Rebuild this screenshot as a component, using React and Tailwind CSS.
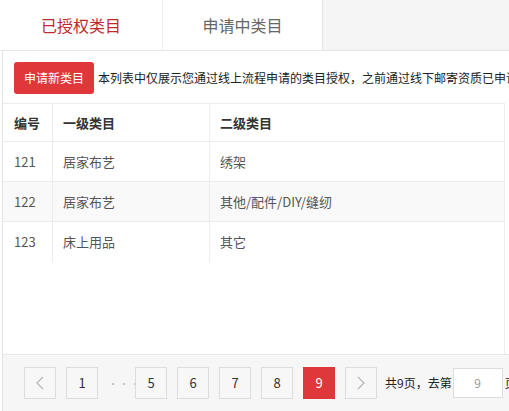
import React from "react";

const rows = [
  { id: "121", first: "居家布艺", second: "绣架" },
  { id: "122", first: "居家布艺", second: "其他/配件/DIY/缝纫" },
  { id: "123", first: "床上用品", second: "其它" },
];

function PageBtn({ children, active }) {
  return (
    <div
      className={
        active
          ? "w-8 h-8 shrink-0 flex items-center justify-center bg-[#e0383a] border border-[#e0383a] text-white text-[13px]"
          : "w-8 h-8 shrink-0 flex items-center justify-center bg-[#f7f7f7] border border-[#dcdcdc] text-[#333] text-[13px]"
      }
    >
      {children}
    </div>
  );
}

function Chevron({ dir }) {
  return (
    <svg width="10" height="16" viewBox="0 0 10 16" fill="none" stroke="#b5b5b5" strokeWidth="1.2">
      {dir === "left" ? <polyline points="8,2 2,8 8,14" /> : <polyline points="2,2 8,8 2,14" />}
    </svg>
  );
}

export default function App() {
  return (
    <div
      className="w-[509px] h-[411px] overflow-hidden bg-white flex flex-col"
      style={{ fontFamily: '"Microsoft YaHei", "Noto Sans CJK SC", "Noto Sans", sans-serif' }}
    >
      {/* tabs */}
      <div className="flex h-[51px] shrink-0 bg-[#f5f5f5] border-b border-[#e5e5e5]">
        <div className="w-[163px] bg-white border-r border-[#eeeeee] flex items-center justify-center text-[16px] text-[#c0282d]">
          已授权类目
        </div>
        <div className="w-[160px] bg-white border-r border-[#e5e5e5] flex items-center justify-center text-[16px] text-[#666]">
          申请中类目
        </div>
      </div>

      {/* content */}
      <div className="flex-1 ml-[2px] border-l border-[#e3e3e3] flex flex-col">
        <div className="flex items-center pl-[11px] pt-[11px] pb-[9px]">
          <div className="h-8 px-[10px] rounded-[3px] bg-[#e0383a] text-white text-[12px] flex items-center shrink-0">
            申请新类目
          </div>
          <div className="ml-[4px] text-[12px] text-[#222] whitespace-nowrap overflow-hidden">
            本列表中仅展示您通过线上流程申请的类目授权，之前通过线下邮寄资质已申请的类目请联系小二
          </div>
        </div>

        <div className="w-[502px] border-t border-r border-[#ececec] text-[13px]">
          <div className="flex h-[38px] border-b border-[#ececec] font-bold text-[#333]">
            <div className="w-[50px] pl-[11px] flex items-center border-r border-[#ececec]">编号</div>
            <div className="w-[157px] pl-[10px] flex items-center border-r border-[#ececec]">一级类目</div>
            <div className="flex-1 pl-[10px] flex items-center">二级类目</div>
          </div>
          {rows.map((r, i) => (
            <div
              key={r.id}
              className={
                "flex h-[40px] text-[#555] " +
                (i % 2 === 1 ? "bg-[#f9f9f9] " : "") +
                (i < rows.length - 1 ? "border-b border-[#ececec]" : "")
              }
            >
              <div className="w-[50px] pl-[11px] flex items-center border-r border-[#ececec]">{r.id}</div>
              <div className="w-[157px] pl-[10px] flex items-center border-r border-[#ececec]">{r.first}</div>
              <div className="flex-1 pl-[10px] flex items-center">{r.second}</div>
            </div>
          ))}
        </div>

        <div className="flex-1 w-[502px] border-r border-[#ececec]" />

        {/* pagination */}
        <div className="h-[57px] shrink-0 bg-[#f6f6f6] border-t border-[#e8e8e8] flex items-center pl-[21px] gap-[10px] text-[12px] text-[#222]">
          <PageBtn>
            <Chevron dir="left" />
          </PageBtn>
          <PageBtn>1</PageBtn>
          <div className="w-[17px] shrink-0 text-center text-[#bbb] text-[10px] tracking-[1px]">···</div>
          <PageBtn>5</PageBtn>
          <PageBtn>6</PageBtn>
          <PageBtn>7</PageBtn>
          <PageBtn>8</PageBtn>
          <PageBtn active>9</PageBtn>
          <PageBtn>
            <Chevron dir="right" />
          </PageBtn>
          <div className="flex shrink-0 items-center whitespace-nowrap -ml-[2px]">
            <span>共9页，去第</span>
            <div className="ml-[1px] w-[50px] h-[30px] bg-white border border-[#ddd] flex items-center justify-center text-[#999]">
              9
            </div>
            <span className="ml-[2px]">页</span>
          </div>
        </div>
      </div>
    </div>
  );
}
